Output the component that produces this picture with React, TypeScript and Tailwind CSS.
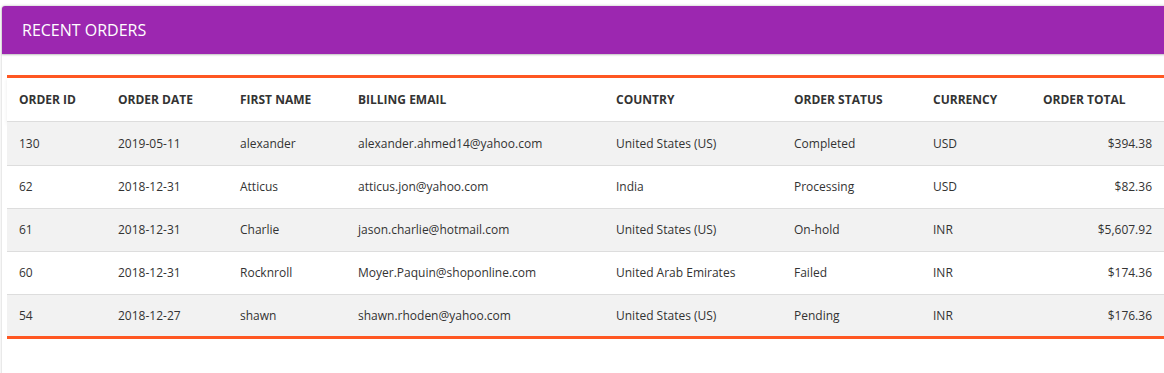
const orders = [
  { id: "130", date: "2019-05-11", name: "alexander", email: "alexander.ahmed14@yahoo.com", country: "United States (US)", status: "Completed", currency: "USD", total: "$394.38" },
  { id: "62", date: "2018-12-31", name: "Atticus", email: "atticus.jon@yahoo.com", country: "India", status: "Processing", currency: "USD", total: "$82.36" },
  { id: "61", date: "2018-12-31", name: "Charlie", email: "jason.charlie@hotmail.com", country: "United States (US)", status: "On-hold", currency: "INR", total: "$5,607.92" },
  { id: "60", date: "2018-12-31", name: "Rocknroll", email: "Moyer.Paquin@shoponline.com", country: "United Arab Emirates", status: "Failed", currency: "INR", total: "$174.36" },
  { id: "54", date: "2018-12-27", name: "shawn", email: "shawn.rhoden@yahoo.com", country: "United States (US)", status: "Pending", currency: "INR", total: "$176.36" },
];

const columns = [
  { label: "Order ID", width: "w-[99px]" },
  { label: "Order Date", width: "w-[122px]" },
  { label: "First Name", width: "w-[118px]" },
  { label: "Billing Email", width: "w-[258px]" },
  { label: "Country", width: "w-[178px]" },
  { label: "Order Status", width: "w-[139px]" },
  { label: "Currency", width: "w-[110px]" },
  { label: "Order Total", width: "w-[133px]" },
];

export default function App() {
  return (
    <div
      className="h-[373px] w-[1164px] overflow-hidden bg-white pt-[6px] pl-[2px]"
      style={{ fontFamily: '"Open Sans", sans-serif' }}
    >
      <div className="h-[400px] w-[1180px] rounded-tl-[3px] bg-white shadow-[0_0_3px_rgba(0,0,0,0.25)]">
        <div className="flex h-[48px] items-center rounded-tl-[3px] bg-[#9c27b0] px-[20px] shadow-[0_1px_2px_rgba(0,0,0,0.25)]">
          <h2 className="text-[16px] text-white">RECENT ORDERS</h2>
        </div>
        <div className="pt-[21px] pl-[5px]">
          <table className="w-[1157px] table-fixed border-collapse border-y-[3px] border-[#ff5722] text-[12px] text-[#333]">
            <thead>
              <tr className="h-[45px] shadow-[0_2px_4px_rgba(0,0,0,0.08)]">
                {columns.map((c) => (
                  <th key={c.label} className={`${c.width} px-[12px] text-left font-bold uppercase`}>
                    {c.label}
                  </th>
                ))}
              </tr>
            </thead>
            <tbody>
              {orders.map((o, i) => (
                <tr
                  key={o.id}
                  className={`border-t border-[#dddddd] ${i === 0 ? "h-[44px]" : "h-[43px]"} ${i % 2 === 0 ? "bg-[#f2f2f2]" : "bg-white"}`}
                >
                  <td className="px-[12px]">{o.id}</td>
                  <td className="px-[12px]">{o.date}</td>
                  <td className="px-[12px]">{o.name}</td>
                  <td className="px-[12px]">{o.email}</td>
                  <td className="px-[12px]">{o.country}</td>
                  <td className="px-[12px]">{o.status}</td>
                  <td className="px-[12px]">{o.currency}</td>
                  <td className="px-[12px] text-right">{o.total}</td>
                </tr>
              ))}
            </tbody>
          </table>
        </div>
      </div>
    </div>
  );
}
